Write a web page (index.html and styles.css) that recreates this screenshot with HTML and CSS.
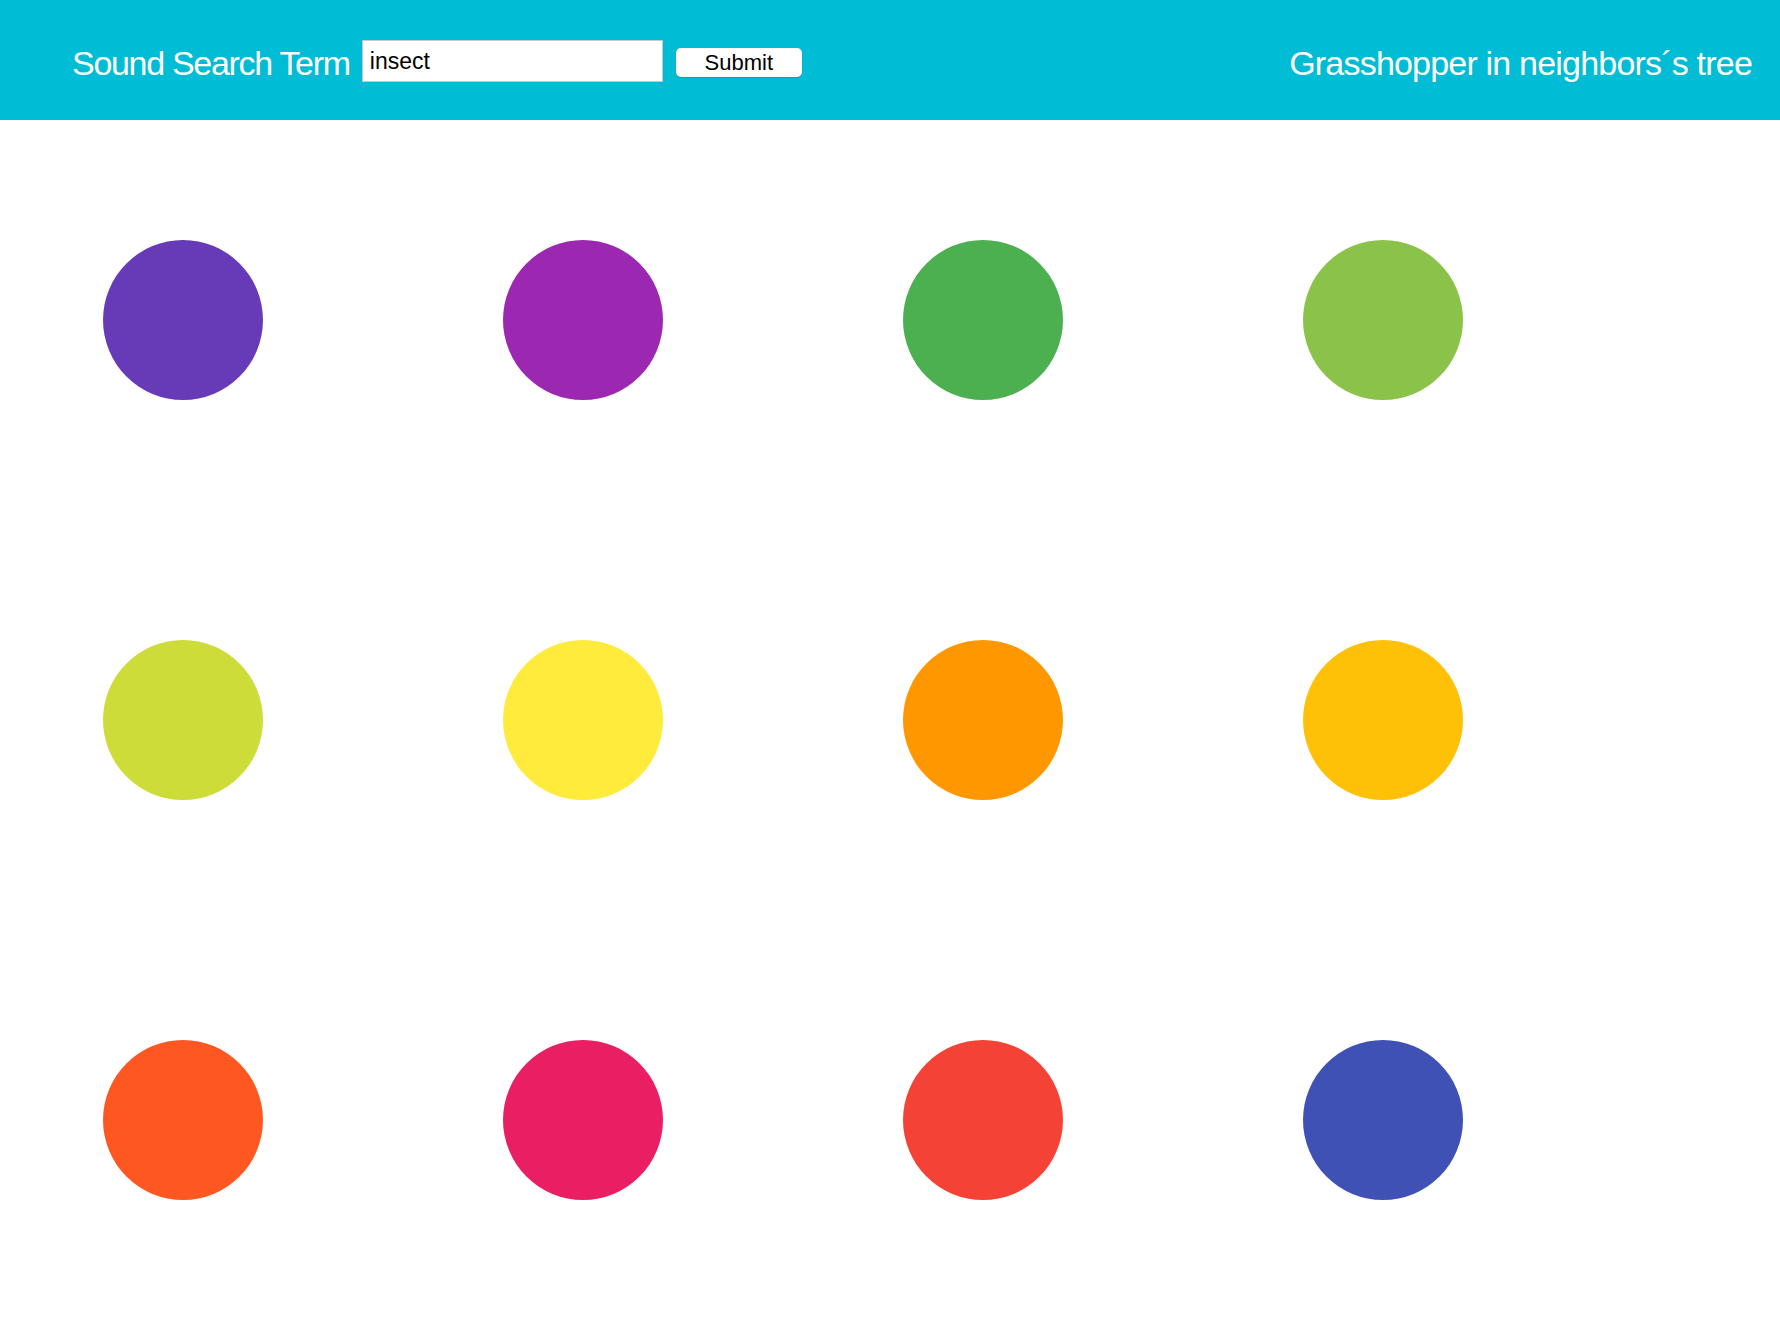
FILE: index.html
```html
<!DOCTYPE html>
<html lang="en">
<head>
<meta charset="utf-8">
<title>Sound Search</title>
<link rel="stylesheet" href="styles.css">
</head>
<body>
<header class="topbar">
  <form class="search" onsubmit="return false;">
    <label class="title title-left" for="term">Sound Search Term</label>
    <input id="term" class="search-input" type="text" value="insect">
    <button class="search-btn" type="submit">Submit</button>
  </form>
  <div class="title title-right">Grasshopper in neighbors´s tree</div>
</header>
<main class="pads">
  <div class="pad c-deep-purple"></div>
  <div class="pad c-purple"></div>
  <div class="pad c-green"></div>
  <div class="pad c-light-green"></div>
  <div class="pad c-lime"></div>
  <div class="pad c-yellow"></div>
  <div class="pad c-orange"></div>
  <div class="pad c-amber"></div>
  <div class="pad c-deep-orange"></div>
  <div class="pad c-pink"></div>
  <div class="pad c-red"></div>
  <div class="pad c-indigo"></div>
</main>
</body>
</html>
```
FILE: styles.css
```css
html, body {
  margin: 0;
  padding: 0;
  background: #ffffff;
  font-family: "Liberation Sans", Arial, sans-serif;
}

.topbar {
  height: 120px;
  background: #00bcd4;
  display: flex;
  align-items: center;
  justify-content: space-between;
  padding: 0 28px 0 72px;
  box-sizing: border-box;
}

.search {
  display: flex;
  align-items: center;
  margin: 0;
}

.title {
  color: #ffffff;
  font-size: 34px;
  line-height: 34px;
  padding-top: 6px;
  white-space: nowrap;
}

.title-left {
  letter-spacing: -1.3px;
  margin-right: 12px;
}

.title-right {
  letter-spacing: -0.8px;
}

.search-input {
  width: 301px;
  height: 42px;
  box-sizing: border-box;
  border: 1px solid #c4c8cc;
  padding: 0 0 0 7px;
  margin: 2px 13px 0 0;
  font-family: "Liberation Sans", Arial, sans-serif;
  font-size: 23px;
  color: #000000;
  background: #ffffff;
  outline: none;
}

.search-btn {
  width: 126px;
  height: 29px;
  box-sizing: border-box;
  border: none;
  border-radius: 5px;
  background: #ffffff;
  box-shadow: 0 1px 1px rgba(0, 0, 0, 0.15);
  font-family: "Liberation Sans", Arial, sans-serif;
  font-size: 22px;
  line-height: 29px;
  color: #000000;
  padding: 0;
  margin-top: 4px;
}

.pads {
  display: grid;
  grid-template-columns: repeat(4, 160px);
  grid-auto-rows: 160px;
  column-gap: 240px;
  row-gap: 240px;
  padding: 120px 0 0 103px;
}

.pad {
  width: 160px;
  height: 160px;
  border-radius: 50%;
}

.c-deep-purple { background: #673ab7; }
.c-purple { background: #9c27b0; }
.c-green { background: #4caf50; }
.c-light-green { background: #8bc34a; }
.c-lime { background: #cddc39; }
.c-yellow { background: #ffeb3b; }
.c-orange { background: #ff9800; }
.c-amber { background: #ffc107; }
.c-deep-orange { background: #ff5722; }
.c-pink { background: #e91e63; }
.c-red { background: #f44336; }
.c-indigo { background: #3f51b5; }
```
